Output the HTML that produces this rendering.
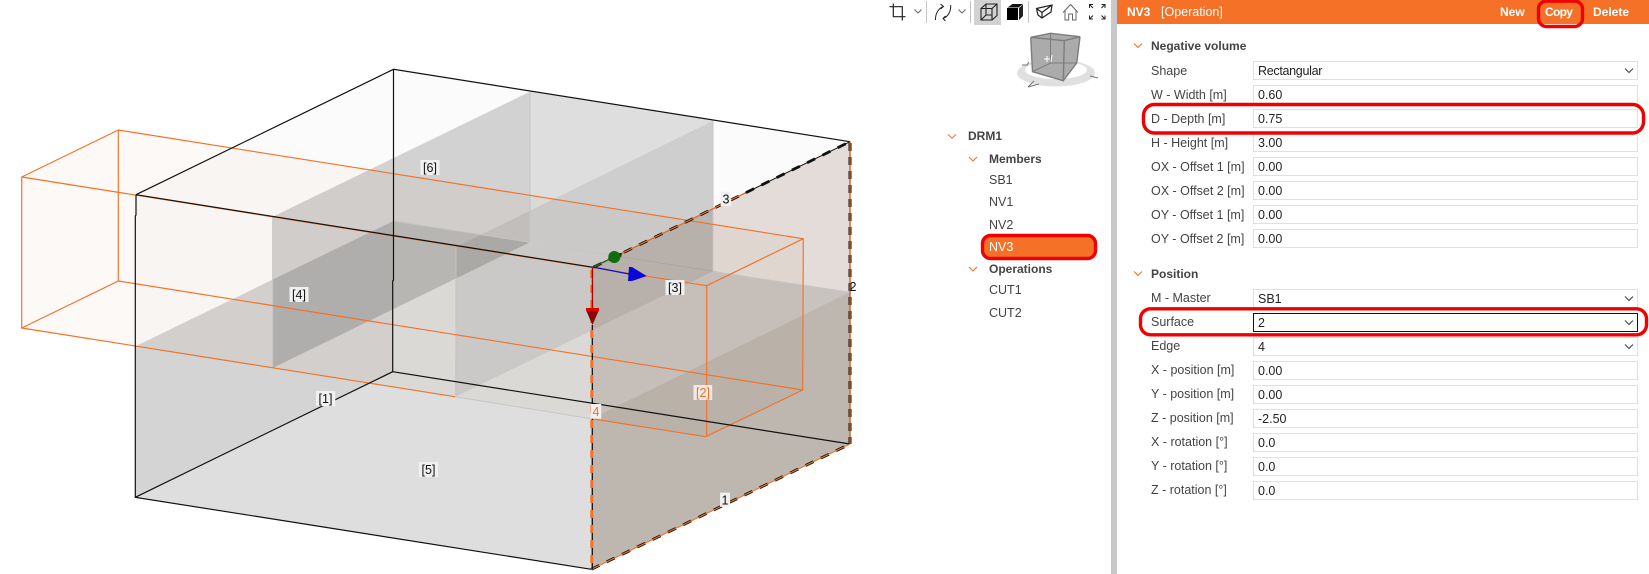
<!DOCTYPE html>
<html><head><meta charset="utf-8">
<style>
html,body{margin:0;padding:0;width:1649px;height:574px;overflow:hidden;background:#fff;font-family:"Liberation Sans",sans-serif}
#wrap{position:relative;width:1649px;height:574px;overflow:hidden;background:#fff}
svg.full{position:absolute;left:0;top:0}
.m{mix-blend-mode:multiply}
.t{position:absolute;font-size:12.5px;line-height:19px;height:19px;white-space:nowrap;color:#444}
.b{font-weight:bold;font-size:12px;color:#444}
.f{position:absolute;left:1253px;width:385px;height:19px;border:1px solid #e0e0e0;box-sizing:border-box;font-size:12.5px;line-height:18px;padding-left:4px;color:#222;white-space:nowrap;background:#fff}
.s{padding-left:4px}
#bar{position:absolute;left:1111px;top:0;width:6px;height:574px;background:#c8c8c8}
#head{position:absolute;left:1117px;top:0;width:532px;height:24px;background:#f47127}
#sel{position:absolute;left:983px;top:236px;width:112px;height:22px;background:#f47127;border-radius:6px}
</style></head><body><div id="wrap">

<svg class="full" width="1649" height="574" viewBox="0 0 1649 574" style="isolation:isolate;background:#fff">
<!-- box hull -->
<polygon class="m" fill="#fbfbfb" points="136,194.7 393.5,69.3 850,141.7 593.3,267.3 592,569 135.3,497.3"/>
<!-- orange hull -->
<polygon class="m" fill="#fcf9f6" points="21.7,177 118.3,130 803.3,238.7 802.7,390 705.7,436.7 21.7,328"/>
<!-- lower left wall -->
<polygon class="m" fill="#d8d8d8" points="136,346 393.3,221 392.7,371.7 135.3,497.3"/>
<!-- lower back wall -->
<polygon class="m" fill="#e2e2e2" points="393.3,221 850,292.3 850,444 392.7,371.7"/>
<!-- floor -->
<polygon class="m" fill="#e2e2e2" points="135.3,497.3 392.7,371.7 850,444 591.3,569.3"/>
<!-- back wall piece -->
<polygon class="m" fill="#e2e2e2" points="530,91.7 713.3,120.7 712.7,271.5 530,242.3"/>
<!-- P1 -->
<polygon class="m" fill="#d6d6d6" points="272.7,216.7 530,91.7 530,242.3 272.7,368"/>
<!-- P2 -->
<polygon class="m" fill="#ededed" points="456,247 713.3,120.7 712.7,271.5 455,397"/>
<!-- right face -->
<polygon class="m" fill="#e3dcd8" points="593.3,267.3 850,141.7 850,444 591.3,569.3"/>
<!-- right lower extra -->
<polygon class="m" fill="#f0efea" points="591.3,418.7 850,292.3 850,444 591.3,569.3"/>

<!-- gray edges -->
<g fill="none" stroke="#c4c4c4" stroke-width="1">
<path d="M272.7 216.7V368M530 91.7V242.3M456 247V397M713 121V272"/>
<path d="M393.3 221L530 242.3M713 272L850 292.3"/>
<path d="M455 396.7L591.3 418.7" stroke="#c6c6c6"/>
</g>

<!-- orange box -->
<g fill="none" stroke="#f47127" stroke-width="1.15">
<path d="M21.7 177L118.3 130V281L21.7 328Z"/>
<path d="M21.7 177L706.7 285.7V436.7M118.3 130L803.3 238.7L802.7 390L705.7 436.7L591.3 418.7M118.3 281L802.7 390M706.7 285.7L803.3 238.7"/>
<path d="M21.7 328L455 396.7"/>
</g>

<!-- black box -->
<g fill="none" stroke="#111" stroke-width="1.2">
<path d="M136 194.7L393.5 69.3L850 141.7"/>
<path d="M136 194.7L593.3 267.3"/>
<path d="M136 194.7V215L135.3 216V497.3L591.3 569.3"/>
<path d="M393.5 69.3V280L392.7 281V371.7L135.3 497.3"/>
<path d="M392.7 371.7L850 444"/>
</g>

<!-- dashed edges -->
<g fill="none">
<path d="M593.3 267.3L850 141.7" stroke="#111" stroke-width="1"/>
<path d="M593.3 267.3L850 141.7" stroke="#111" stroke-width="2.8" stroke-dasharray="9 8"/>
<path d="M593.3 267.3L745 193" stroke="#f47127" stroke-width="1.1"/>
<path d="M591.3 569.3L850 444" stroke="#111" stroke-width="2.8" stroke-dasharray="9 8"/>
<path d="M591.3 569.3L850 444" stroke="#f47127" stroke-width="1.1"/>
<path d="M592.3 325V569" stroke="#111" stroke-width="1.3"/>
<path d="M591.8 270V569" stroke="#f47127" stroke-width="3" stroke-dasharray="8 7"/>
<path d="M850 141.7V444" stroke="#111" stroke-width="1.3"/>
<path d="M850 143V444" stroke="#111" stroke-width="3" stroke-dasharray="8 6"/>
<path d="M850 141.7V444" stroke="#f47127" stroke-width="1.1"/>
</g>

<!-- gizmo -->
<path d="M593 267L614 257" stroke="#0a6a0a" stroke-width="1.2"/>
<circle cx="614.3" cy="257" r="6" fill="#0f6e0f"/>
<path d="M619 253L622 253 L621 258 Z" fill="#0b3d0b"/>
<path d="M593 267L629 274" stroke="#1010d0" stroke-width="1.3"/>
<polygon points="629,267 632,267 646.7,276 632,281 628,281" fill="#0808d8"/>
<path d="M592.4 267V309" stroke="#b00000" stroke-width="1.4"/>
<polygon points="586,310 599,310 592.4,325" fill="#8a0505"/>
<rect x="586" y="308" width="13" height="3" fill="#e00000"/>

<!-- labels -->
<g font-family="'Liberation Sans',sans-serif" font-size="12.5" text-anchor="middle">
<rect x="420.5" y="160" width="19" height="15" fill="#f0f0f0"/><text x="430" y="172" fill="#111">[6]</text>
<rect x="289.5" y="287" width="19" height="15" fill="#f0f0f0"/><text x="299" y="299" fill="#111">[4]</text>
<rect x="316" y="391" width="19.3" height="15" fill="#f0f0f0"/><text x="325.5" y="403" fill="#111">[1]</text>
<rect x="419" y="462" width="19" height="15" fill="#f0f0f0"/><text x="428.5" y="474" fill="#111">[5]</text>
<rect x="665.5" y="280" width="19" height="15" fill="#f0f0f0"/><text x="675" y="292" fill="#111">[3]</text>
<rect x="693.5" y="385" width="18.7" height="15" fill="#efe9e6"/><text x="703" y="397" fill="#f47127">[2]</text>
<rect x="720.7" y="191.7" width="10.5" height="14.5" fill="#f0f0f0"/><text x="726" y="203.5" fill="#111">3</text>
<rect x="720" y="492.7" width="10" height="14" fill="#f0f0f0"/><text x="725" y="504.5" fill="#111">1</text>
<rect x="590.7" y="404" width="10.5" height="14.7" fill="#f3f0ee"/><text x="596" y="416" fill="#f47127">4</text>
<text x="853" y="291" fill="#111">2</text>
</g>

<!-- toolbar -->
<rect x="974" y="0" width="27" height="25" fill="#d2d2d2"/>
<g fill="none" stroke="#222" stroke-width="1.2">
<path d="M893.3 3.5V16.7H905.5M889.5 6.7H902.3V20.5"/>
<path d="M914.5 9.5L918 13L921.5 9.5M958.5 9.5L962 13L965.5 9.5" stroke="#666" stroke-width="1"/>
<path d="M943.5 6.5C938 8.5 935.3 14 935.5 20M940.5 4L943.5 6.5L940.5 9" stroke-width="1"/>
<path d="M943 18.5C948.5 16.5 951 11 950.7 5M945.5 16L943 18.5L945.5 21" stroke-width="1"/>
<path d="M981 8.5H992V20H981ZM981 8.5L986 4H997V15.5L992 20M992 8.5L997 4M986 4V10M986 15L981 20M986 15H992M986 10V15" stroke-width="1.1"/>
<path d="M1036.5 8.5L1052 5L1051 12L1042 18L1038 15ZM1036.5 8.5L1042 12.5L1052 5M1042 12.5V18" stroke-width="1.2"/>
<path d="M1063 12.5L1070.5 4.5L1078 12.5M1065 11V20H1068.7V14H1072.5V20H1076V11" stroke="#666" stroke-width="1"/>
<path d="M1089.5 8V4.5H1093M1089.5 4.5L1093 8M1101.5 4.5H1105V8M1105 4.5L1101.5 8M1089.5 15.5V19H1093M1089.5 19L1093 15.5M1105 15.5V19H1101.5M1105 19L1101.5 15.5" stroke-width="1"/>
</g>
<path d="M926.5 1V23M970.5 1V23M1028.5 1V23" stroke="#c4c4c4" stroke-width="1"/>
<polygon points="1007,8 1018,8 1018,20 1007,20" fill="#000"/>
<polygon points="1007.5,7.5 1012.5,4 1023,4 1018.5,7.5" fill="#111"/>
<polygon points="1019,8 1023,4.5 1023,16 1019,20" fill="#222"/>

<!-- nav cube -->
<ellipse cx="1056" cy="73" rx="39" ry="13.5" fill="#e0e0e0"/>
<ellipse cx="1056" cy="70" rx="31" ry="9" fill="#fff"/>
<polygon points="1030.7,37.3 1050.5,33.3 1080,36.7 1076.7,63 1063.3,80.7 1032.5,71.7" fill="#ababab"/>
<g fill="none" stroke="#7d7d7d" stroke-width="1.4">
<path d="M1030.7 37.3L1050.5 33.3L1080 36.7L1064.3 40.7ZM1030.7 37.3L1032.5 71.7L1063.3 80.7L1064.3 40.7M1080 36.7L1076.7 63L1063.3 80.7"/>
<path d="M1050.5 33.3V63M1032.5 71.7L1050.5 63L1076.7 63" stroke-width="1"/>
</g>
<path d="M1044 59H1050M1047 56V62M1052 55L1051 62" stroke="#fff" stroke-width="1" fill="none"/>
<path d="M1022 65H1027L1029 62M1028 87L1034 81M1028 87L1039 84M1090 76L1098 78" stroke="#777" stroke-width="1.1" fill="none"/>
</svg>

<!-- tree -->
<div id="sel"></div>
<div class="t b" style="left:968px;top:127px">DRM1</div>
<div class="t b" style="left:989px;top:150px">Members</div>
<div class="t" style="left:989px;top:171px">SB1</div>
<div class="t" style="left:989px;top:193px">NV1</div>
<div class="t" style="left:989px;top:216px">NV2</div>
<div class="t" style="left:989px;top:238px;color:#fff">NV3</div>
<div class="t b" style="left:989px;top:260px">Operations</div>
<div class="t" style="left:989px;top:281px">CUT1</div>
<div class="t" style="left:989px;top:304px">CUT2</div>

<!-- panel -->
<div id="bar"></div>
<div id="head"></div>
<div class="t b" style="left:1127px;top:3px;color:#fff">NV3</div>
<div class="t" style="left:1161px;top:3px;color:#fff">[Operation]</div>
<div class="t b" style="left:1500px;top:3px;color:#fff">New</div>
<div class="t b" style="left:1545px;top:3px;color:#fff;letter-spacing:-.7px">Copy</div>
<div class="t b" style="left:1593px;top:3px;color:#fff">Delete</div>

<div class="t b" style="left:1151px;top:37px">Negative volume</div>
<div class="t" style="left:1151px;top:62px">Shape</div><div class="f s" style="top:61px;letter-spacing:-.3px">Rectangular</div>
<div class="t" style="left:1151px;top:86px">W - Width [m]</div><div class="f" style="top:85px">0.60</div>
<div class="t" style="left:1151px;top:110px">D - Depth [m]</div><div class="f" style="top:109px">0.75</div>
<div class="t" style="left:1151px;top:134px">H - Height [m]</div><div class="f" style="top:133px">3.00</div>
<div class="t" style="left:1151px;top:158px">OX - Offset 1 [m]</div><div class="f" style="top:157px">0.00</div>
<div class="t" style="left:1151px;top:182px">OX - Offset 2 [m]</div><div class="f" style="top:181px">0.00</div>
<div class="t" style="left:1151px;top:206px">OY - Offset 1 [m]</div><div class="f" style="top:205px">0.00</div>
<div class="t" style="left:1151px;top:230px">OY - Offset 2 [m]</div><div class="f" style="top:229px">0.00</div>

<div class="t b" style="left:1151px;top:265px">Position</div>
<div class="t" style="left:1151px;top:289px">M - Master</div><div class="f s" style="top:289px">SB1</div>
<div class="t" style="left:1151px;top:313px">Surface</div><div class="f s" style="top:313px;border-color:#111">2</div>
<div class="t" style="left:1151px;top:337px">Edge</div><div class="f s" style="top:337px">4</div>
<div class="t" style="left:1151px;top:361px">X - position [m]</div><div class="f" style="top:361px">0.00</div>
<div class="t" style="left:1151px;top:385px">Y - position [m]</div><div class="f" style="top:385px">0.00</div>
<div class="t" style="left:1151px;top:409px">Z - position [m]</div><div class="f" style="top:409px">-2.50</div>
<div class="t" style="left:1151px;top:433px">X - rotation [°]</div><div class="f" style="top:433px">0.0</div>
<div class="t" style="left:1151px;top:457px">Y - rotation [°]</div><div class="f" style="top:457px">0.0</div>
<div class="t" style="left:1151px;top:481px">Z - rotation [°]</div><div class="f" style="top:481px">0.0</div>

<!-- overlays: chevrons and red highlights -->
<svg class="full" width="1649" height="574" viewBox="0 0 1649 574">
<g fill="none" stroke="#f47127" stroke-width="1.1">
<path d="M948 134.5L952 138L956 134.5M969 157L973 161L977 157M969 267L973 271L977 267M1134 43.5L1138 47.5L1142 43.5M1134 271.5L1138 275.5L1142 271.5"/>
</g>
<g fill="none" stroke="#444" stroke-width="1.1">
<path d="M1625 68.5L1629 72.5L1633 68.5M1625 296.5L1629 300.5L1633 296.5M1625 320.5L1629 324.5L1633 320.5M1625 344.5L1629 348.5L1633 344.5"/>
</g>
<g fill="none" stroke="#f00000" stroke-width="3.4">
<rect x="1538.5" y="1" width="44" height="25.5" rx="8"/>
<rect x="1143.5" y="104.5" width="500" height="28.5" rx="11"/>
<rect x="1140.5" y="308.8" width="506" height="26" rx="10"/>
<rect x="982.5" y="235.5" width="113" height="23" rx="8"/>
</g>
</svg>
</div></body></html>
